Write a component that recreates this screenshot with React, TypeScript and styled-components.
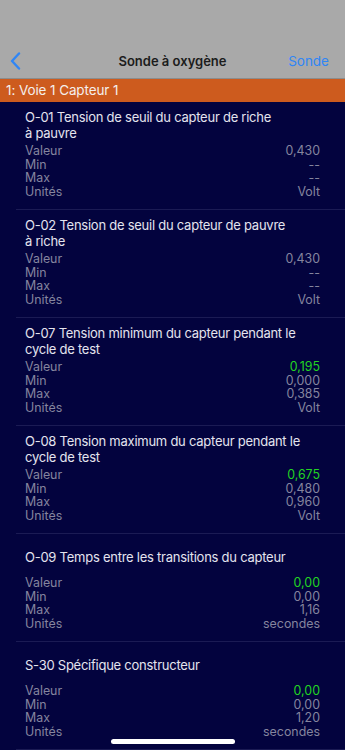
import styled, { createGlobalStyle } from "styled-components"

const GlobalStyle = createGlobalStyle`
    html, body {
        margin: 0;
        padding: 0;
        background: #03033e;
    }
    * {
        box-sizing: border-box;
    }
`

const Page = styled.div`
    position: relative;
    width: 345px;
    height: 750px;
    overflow: hidden;
    display: flex;
    flex-direction: column;
    background: #03033e;
    font-family: Inter, "Liberation Sans", sans-serif;
`

const NavBar = styled.header`
    flex: none;
    height: 79px;
    padding-top: 44px;
    background: #a9a9a9;
    border-bottom: 1px solid #8c8c8c;
    display: grid;
    grid-template-columns: 80px 1fr 80px;
    align-items: center;
`

const BackButton = styled.div`
    height: 34px;
    display: flex;
    align-items: center;
    padding-left: 10px;
`

const NavTitle = styled.h1`
    margin: 0;
    text-align: center;
    font-size: 13px;
    font-weight: 600;
    color: #1c1c1c;
    line-height: 34px;
`

const NavAction = styled.div`
    text-align: right;
    padding-right: 16px;
    font-size: 13.5px;
    color: #2f86f6;
    line-height: 34px;
`

const SectionHeader = styled.div`
    flex: none;
    height: 23px;
    padding-left: 6px;
    background: #cd5b1e;
    color: #f4efec;
    font-size: 13.5px;
    letter-spacing: -0.1px;
    line-height: 23px;
`

const List = styled.div`
    flex: 1;
`

const Card = styled.section`
    margin-left: 16px;
    padding: 7px 25px 11px 9px;
    border-bottom: 1px solid #1b1b54;
`

const Title = styled.div`
    height: 32px;
    display: flex;
    flex-direction: column;
    justify-content: center;
    color: #e4e4ee;
    font-size: 13px;
    letter-spacing: -0.25px;
    line-height: 16px;
    white-space: nowrap;
    margin-bottom: 3px;
`

const Rows = styled.div`
    display: grid;
    grid-template-columns: 1fr auto;
    font-size: 12.4px;
    line-height: 13.5px;
`

const Label = styled.span`
    color: #85859e;
`

const Value = styled.span<{ $live?: boolean }>`
    text-align: right;
    color: ${p => p.$live ? "#22d322" : "#85859e"};
`

const HomeIndicator = styled.div`
    position: absolute;
    left: 111px;
    bottom: 6px;
    width: 124px;
    height: 5px;
    border-radius: 3px;
    background: #ffffff;
`

type Sensor = {
    title: string[]
    value: string
    min: string
    max: string
    unit: string
}

const sensors: Sensor[] = [
    { title: ["O-01 Tension de seuil du capteur de riche", "à pauvre"], value: "0,430", min: "--", max: "--", unit: "Volt" },
    { title: ["O-02 Tension de seuil du capteur de pauvre", "à riche"], value: "0,430", min: "--", max: "--", unit: "Volt" },
    { title: ["O-07 Tension minimum du capteur pendant le", "cycle de test"], value: "0,195", min: "0,000", max: "0,385", unit: "Volt" },
    { title: ["O-08 Tension maximum du capteur pendant le", "cycle de test"], value: "0,675", min: "0,480", max: "0,960", unit: "Volt" },
    { title: ["O-09 Temps entre les transitions du capteur"], value: "0,00", min: "0,00", max: "1,16", unit: "secondes" },
    { title: ["S-30 Spécifique constructeur"], value: "0,00", min: "0,00", max: "1,20", unit: "secondes" },
]

// value is green once a min/max was actually measured
const isLive = (s: Sensor) => s.min !== "--"

export default function App() {
    return (
        <Page>
            <GlobalStyle />
            <NavBar>
                <BackButton>
                    <svg width="11" height="18" viewBox="0 0 11 18">
                        <path d="M9 1.5 L2 9 L9 16.5" fill="none" stroke="#2f86f6" strokeWidth="2.4" strokeLinecap="round" strokeLinejoin="round" />
                    </svg>
                </BackButton>
                <NavTitle>Sonde à oxygène</NavTitle>
                <NavAction>Sonde</NavAction>
            </NavBar>
            <SectionHeader>1: Voie 1 Capteur 1</SectionHeader>
            <List>
                {sensors.map(s => (
                    <Card key={s.title[0]}>
                        <Title>
                            {s.title.map(line => <div key={line}>{line}</div>)}
                        </Title>
                        <Rows>
                            <Label>Valeur</Label>
                            <Value $live={isLive(s)}>{s.value}</Value>
                            <Label>Min</Label>
                            <Value>{s.min}</Value>
                            <Label>Max</Label>
                            <Value>{s.max}</Value>
                            <Label>Unités</Label>
                            <Value>{s.unit}</Value>
                        </Rows>
                    </Card>
                ))}
            </List>
            <HomeIndicator />
        </Page>
    )
}
